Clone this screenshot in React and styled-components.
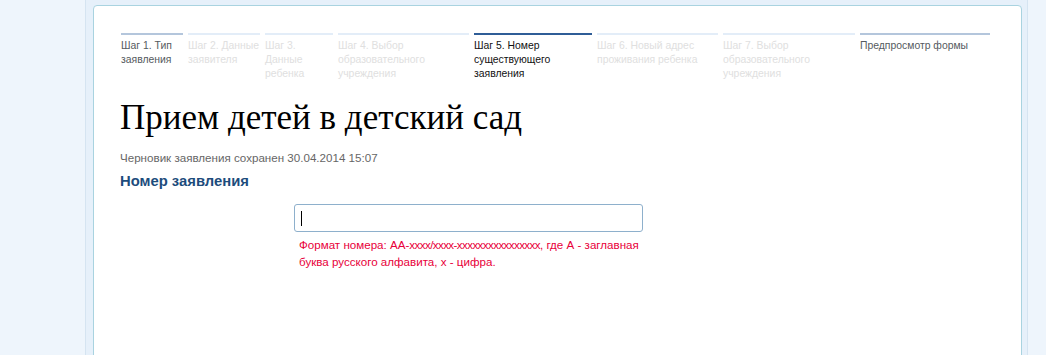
import React from "react";
import styled, { createGlobalStyle } from "styled-components";

const Global = createGlobalStyle`
  html, body { margin: 0; padding: 0; background: #eef5fc; }
  body { font-family: Arial, "Liberation Sans", sans-serif; overflow: hidden; }
`;

const Wrapper = styled.div`
  margin-left: 85px;
  width: 943px;
  height: 355px;
  overflow: hidden;
  background: #e6f0fa;
  border-left: 1px solid #d5e4f1;
  border-right: 1px solid #d5e4f1;
  padding: 5px 5px 0 7px;
  box-sizing: border-box;
`;

const Panel = styled.div`
  background: #fff;
  border: 1px solid #a9d3e0;
  border-radius: 4px;
  min-height: 400px;
  padding: 27px 27px 0 27px;
  box-sizing: border-box;
`;

const Steps = styled.div`
  display: flex;
  gap: 5px;
  align-items: flex-start;
`;

const stepColors = {
  done: { line: "#b4c6dc", text: "#555a60" },
  todo: { line: "#e3edf8", text: "#e0e0e0" },
  active: { line: "#2f5d97", text: "#111" },
};

const Step = styled.div`
  width: ${(p) => p.$w}px;
  flex: none;
  border-top: 2px solid ${(p) => stepColors[p.$state].line};
  padding-top: 4px;
  font-size: 10.4px;
  line-height: 14px;
  color: ${(p) => stepColors[p.$state].text};
`;

const Title = styled.h1`
  margin: 17px 0 0 -1px;
  font-family: "Liberation Serif", "Times New Roman", serif;
  font-weight: normal;
  font-size: 35px;
  line-height: 40px;
  color: #000;
`;

const Saved = styled.div`
  margin-top: 12px;
  font-size: 11.6px;
  line-height: 16px;
  color: #666;
  margin-left: -1px;
`;

const Section = styled.div`
  margin-top: 6px;
  font-size: 14.8px;
  font-weight: bold;
  line-height: 18px;
  color: #1d4c7c;
  margin-left: -1px;
`;

const Field = styled.div`
  margin-top: 14px;
  padding-left: 173px;
  width: 349px;
`;

const Input = styled.div`
  height: 26px;
  border: 1px solid #8eb0cc;
  border-radius: 3px;
  position: relative;
  box-sizing: content-box;
`;

const Caret = styled.span`
  position: absolute;
  left: 6px;
  top: 6px;
  width: 1px;
  height: 15px;
  background: #000;
`;

const Hint = styled.div`
  margin-top: 4px;
  padding-left: 5px;
  font-size: 11.6px;
  line-height: 17px;
  color: #e8003a;
`;

const HintLine = styled.span`
  display: block;
  white-space: nowrap;
`;

const XRun = styled.span`
  letter-spacing: -0.6px;
`;

const steps = [
  { t: "Шаг 1. Тип заявления", w: 62, s: "done" },
  { t: "Шаг 2. Данные заявителя", w: 72, s: "todo" },
  { t: "Шаг 3. Данные ребенка", w: 68, s: "todo" },
  { t: "Шаг 4. Выбор образовательного учреждения", w: 131, s: "todo" },
  { t: "Шаг 5. Номер существующего заявления", w: 118, s: "active" },
  { t: "Шаг 6. Новый адрес проживания ребенка", w: 121, s: "todo" },
  { t: "Шаг 7. Выбор образовательного учреждения", w: 132, s: "todo" },
  { t: "Предпросмотр формы", w: 130, s: "done" },
];

export default function App() {
  return (
    <>
      <Global />
      <Wrapper>
        <Panel>
          <Steps>
            {steps.map((st) => (
              <Step key={st.t} $w={st.w} $state={st.s}>
                {st.t}
              </Step>
            ))}
          </Steps>
          <Title>Прием детей в детский сад</Title>
          <Saved>Черновик заявления сохранен 30.04.2014 15:07</Saved>
          <Section>Номер заявления</Section>
          <Field>
            <Input>
              <Caret />
            </Input>
            <Hint>
              <HintLine>
                Формат номера: АА-<XRun>xxxx/xxxx-xxxxxxxxxxxxxxxx</XRun>, где А - заглавная
              </HintLine>
              <HintLine>буква русского алфавита, x - цифра.</HintLine>
            </Hint>
          </Field>
        </Panel>
      </Wrapper>
    </>
  );
}
